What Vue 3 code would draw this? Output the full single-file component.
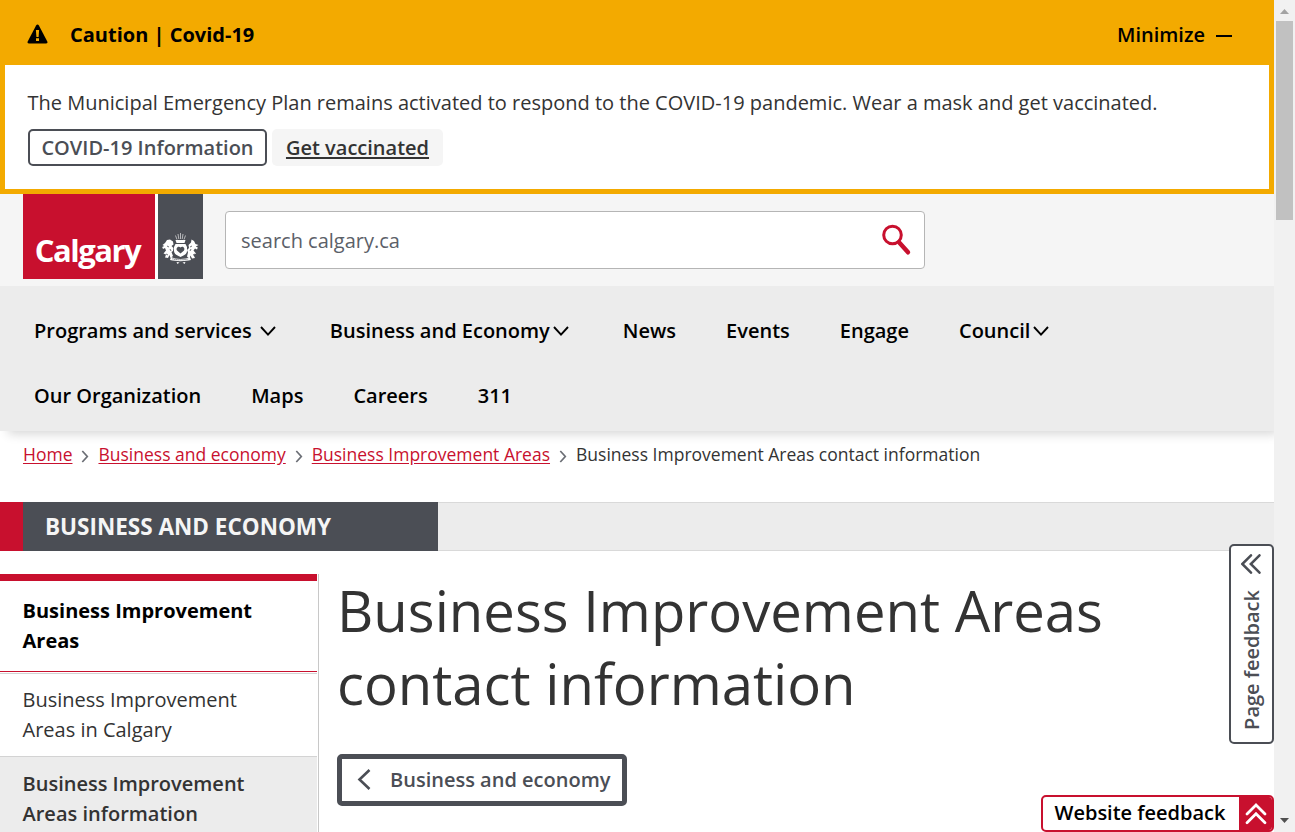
<script setup>
const rowOne = [
  { label: 'Programs and services', drop: true, gap: 8 },
  { label: 'Business and Economy', drop: true, gap: 3 },
  { label: 'News' },
  { label: 'Events' },
  { label: 'Engage' },
  { label: 'Council', drop: true, gap: 3 },
]
const rowTwo = [{ label: 'Our Organization' }, { label: 'Maps' }, { label: 'Careers' }, { label: '311' }]
const crumbs = ['Home', 'Business and economy', 'Business Improvement Areas']
</script>

<template>
  <div class="window">
    <div class="page">
      <section class="alert">
        <div class="alert-head">
          <svg class="warn" width="21" height="20" viewBox="0 0 21 20">
            <path d="M10.5 0.5c.6 0 1 .3 1.400 1L20.300 17.500c.5 1-.1 2-1.200 2H1.900C.8 19.500.2 18.500.7 17.500L9.100 1.500c.4-.7.800-1 1.400-1z" />
            <path d="M8.900 6h3.200l-.5 7H9.400zM9 14.200h3v2.800H9z" fill="#f3aa00" />
          </svg>
          <span class="alert-title">Caution | Covid-19</span>
          <span class="minimize">Minimize</span>
          <span class="dash"></span>
        </div>
        <div class="alert-body">
          <p>The Municipal Emergency Plan remains activated to respond to the COVID-19 pandemic. Wear a mask and get vaccinated.</p>
          <div class="alert-actions">
            <a class="btn-outline"><span>COVID-19 Information</span></a>
            <a class="btn-soft"><span>Get vaccinated</span></a>
          </div>
        </div>
      </section>

      <header class="masthead">
        <div class="logo">
          <div class="logo-name"><span>Calgary</span></div>
          <div class="logo-crest">
            <svg width="37" height="32" viewBox="0 0 37 32" fill="#fff">
              <path d="M13.500 2.500l1.500 4M16 1l.8 5M18.500 0v6M21 1l-.8 5M23.500 2.500l-1.500 4" stroke="#fff" stroke-width=".8" opacity=".75" />
              <path d="M13.500 7h10l-1 3h-8z" />
              <path d="M13.500 11h10l1.500 3v4c0 3-3 4.500-6.500 6-3.500-1.500-6.500-3-6.500-6v-4z" />
              <path d="M18.500 20.500l-3.500-3c-1.500-2.500 1.500-5 3.500-3 2-2 5 .5 3.500 3z" fill="#4b4e55" />
              <path d="M0.500 12l2.500-2 2-3 3-.5 3 2 .5 3-2 1.500 2 2-.5 3-1.500 1 1.500 4-2.500 2-1-3-1.500 3-3-.5 1-3-2.500-1 2.500-3-1-2.500-2 1-.8-2 2-1z" />
              <path d="M36.500 12l-3-1-1.500-3-2.500-1.500-.5 3-2.500 2.500.5 3-2 2 1 2.500-1 4 2.500 2 1-3 1.500 3 3-.5-1.500-3 2.500-1.500-2.500-3 1.500-2 2 1 .8-2-2-1z" />
              <path d="M5 13l2 1M8 16l1 2M30 13l-2 1M29 16l-1 2M4 21l2 1M33 21l-2 1" stroke="#4b4e55" stroke-width=".8" />
              <path d="M9 24c5 2.500 14 2.500 19 0l1 3c-6 1.500-15 1.500-21 0z" />
              <path d="M10.500 25.800c5 1.300 11 1.300 16 0" stroke="#4b4e55" fill="none" stroke-width="1.100" stroke-dasharray="1 1" />
              <path d="M14.500 29l3 .5-2 1.500zM20.500 29.500l3-.5-1 2z" />
            </svg>
          </div>
        </div>
        <div class="search">
          <span>search calgary.ca</span>
          <svg width="30" height="32" viewBox="0 0 30 32" fill="none" stroke="#c8102e">
            <circle cx="10.500" cy="11" r="8.800" stroke-width="3" />
            <path d="M17 18.200L26 28.300" stroke-width="4.400" stroke-linecap="round" />
          </svg>
        </div>
      </header>

      <nav class="menu">
        <div v-for="(row, r) in [rowOne, rowTwo]" :key="r" class="menu-row">
          <a v-for="(item, i) in row" :key="item.label" :class="['item', 'r' + r + i]">
            <span>{{ item.label }}</span>
            <svg v-if="item.drop" :style="{ marginLeft: item.gap + 'px' }" width="16" height="12" viewBox="0 0 16 12" fill="none" stroke="#000" stroke-width="1.900">
              <path d="M1 2L8 9.600L15 2" />
            </svg>
          </a>
        </div>
      </nav>

      <div class="crumbs">
        <template v-for="(c, i) in crumbs" :key="c">
          <a :class="'c' + i">{{ c }}</a>
          <svg width="8" height="13" viewBox="0 0 8 13" fill="none" stroke="#6b6e75" stroke-width="1.700"><path d="M1.300 1l5 5.500-5 5.500" /></svg>
        </template>
        <span>Business Improvement Areas contact information</span>
      </div>

      <div class="band">
        <div class="band-title"><span>BUSINESS AND ECONOMY</span></div>
      </div>

      <main class="main">
        <aside class="side">
          <div class="side-head">Business Improvement<br />Areas</div>
          <div class="side-link">Business Improvement<br />Areas in Calgary</div>
          <div class="side-link active">Business Improvement<br />Areas information</div>
        </aside>
        <article class="content">
          <h1>Business Improvement Areas<br />contact information</h1>
          <a class="back">
            <svg width="14" height="22" viewBox="0 0 14 22" fill="none" stroke="#4b4e55" stroke-width="2.600"><path d="M12.500 1L2.500 10.500l10 9.500" /></svg>
            <span>Business and economy</span>
          </a>
        </article>
      </main>
    </div>

    <div class="scroll">
      <svg width="21" height="20" viewBox="0 0 21 20"><path d="M6 14l4.500-5 4.500 5z" fill="#a3a3a3" /></svg>
      <div class="thumb"></div>
      <svg class="down" width="21" height="20" viewBox="0 0 21 20"><path d="M6 6l4.500 5L15 6z" fill="#505050" /></svg>
    </div>

    <div class="page-fb">
      <svg width="20" height="20" viewBox="0 0 20 20" fill="none" stroke="#4b4e55" stroke-width="2.500" stroke-linecap="round"><path d="M10 1.300L1.300 10l8.700 8.700M18.500 1.300L9.800 10l8.700 8.700" /></svg>
      <span>Page feedback</span>
    </div>
    <div class="site-fb">
      <span class="site-fb-label">Website feedback</span>
      <span class="site-fb-icon">
        <svg width="22" height="22" viewBox="0 0 22 22" fill="none" stroke="#fff" stroke-width="2.800" stroke-linecap="round"><path d="M2 11L11 2l9 9M2 19.700l9-9 9 9" /></svg>
      </span>
    </div>
  </div>
</template>

<style>
body { margin: 0; overflow: hidden; }
</style>

<style scoped>
* { box-sizing: border-box; }
.window { position: relative; display: flex; width: 1295px; height: 832px; overflow: hidden; background: #fff; font-family: "Open Sans", sans-serif; font-size: 20px; line-height: 30px; color: #333; }
.window span, .window a { white-space: nowrap; }
.page { width: 1274px; }
.alert { height: 194px; background: #f3aa00; padding: 0 5px 5px; }
.alert-head { height: 65px; padding: 5px 37px 0 22px; display: flex; align-items: center; color: #000; }
.warn { margin-top: -3px; }
.alert-title { margin-left: 22px; font-weight: 700; }
.minimize { margin-left: auto; font-weight: 600; }
.dash { width: 16px; height: 1.500px; background: #000; margin: 2px 0 0 11px; }
.alert-body { height: 124px; background: #fff; padding: 23px 22.500px; }
.alert-body p { margin: 0; white-space: nowrap; }
.alert-actions { display: flex; gap: 5px; margin: 11px 0 0 0.500px; font-weight: 600; }
.btn-outline { width: 239px; height: 37px; border: 2px solid #4b4e55; border-radius: 5px; display: flex; align-items: center; justify-content: center; color: #4b4e55; }
.btn-soft { width: 171px; height: 37px; border-radius: 5px; background: #f5f5f5; display: flex; align-items: center; justify-content: center; text-decoration: underline; text-decoration-thickness: 2px; text-underline-offset: 2px; }
.masthead { height: 92px; background: #f5f5f5; display: flex; padding-left: 23px; }
.logo { display: flex; width: 180px; height: 85px; gap: 3px; background: #fff; }
.logo-name { width: 132px; background: #c8102e; color: #fff; font: 700 31px/40px "Open Sans", sans-serif; letter-spacing: -1.500px; display: flex; justify-content: center; padding: 36px 3px 0 0; }
.logo-crest { width: 45px; background: #4b4e55; padding: 39px 0 0 4px; }
.logo-crest svg { display: block; }
.search { width: 700px; height: 58px; margin: 17px 0 0 22px; border: 1px solid #b5b5b5; border-radius: 4px; background: #fff; display: flex; align-items: center; justify-content: space-between; padding: 0 12px 0 15px; }
.search span { color: #5b6068; padding-top: 2px; }
.menu { position: relative; height: 145px; background: #ececec; padding: 12px 34px 0; font-weight: 600; color: #000; box-shadow: 6px 5px 10px -2px rgba(0, 0, 0, .16); clip-path: inset(0 0 -20px 0); }
.menu-row { height: 65px; display: flex; align-items: center; gap: 50px; }
.item { display: flex; align-items: center; }
.r00, .r01 { margin-right: 4px; }
.crumbs { height: 71px; padding: 10px 23px; display: flex; align-items: flex-start; font-size: 17.500px; line-height: 26px; }
.crumbs a { color: #c8102e; text-decoration: underline; text-underline-offset: 2px; }
.crumbs svg { margin: 9px 9px 0; }
.band { height: 49px; background: #ececec; border-top: 1px solid #d9d9d9; border-bottom: 1px solid #d9d9d9; }
.band-title { margin-top: -1px; width: 438px; height: 49px; background: #4b4e55; border-left: 23px solid #c8102e; padding-left: 22px; font-size: 22.500px; font-weight: 700; line-height: 50px; color: #f5f5f5; }
.main { display: flex; padding-top: 23px; }
.side { width: 319px; height: 260px; border-right: 1px solid #c8c8c8; padding-right: 1px; }
.side-head { height: 98px; border-top: 7px solid #c8102e; border-bottom: 1px solid #c8102e; padding: 15px 22.500px; font-weight: 700; color: #000; margin-bottom: 1px; }
.side-link { height: 83px; border-top: 1px solid #d3d3d3; padding: 11px 22.500px; }
.side-link.active { height: 84px; background: #ececec; font-weight: 600; padding-top: 12px; }
.content { padding-left: 18px; }
h1 { margin: 0; font-size: 56.250px; line-height: 73px; font-weight: 400; white-space: nowrap; }
.back { margin-top: 34px; width: 290px; height: 52px; border: 5px solid #4b4e55; border-radius: 5px; display: flex; align-items: center; padding-left: 15px; color: #4b4e55; font-weight: 600; }
.back svg { margin-right: 19px; }
.scroll { width: 21px; height: 832px; background: #f1f1f1; display: flex; flex-direction: column; }
.scroll svg { display: block; }
.thumb { width: 17px; height: 199px; margin: 1px 0 0 2px; background: #c1c1c1; }
.down { margin-top: auto; }
.page-fb { position: absolute; left: 1229px; top: 544px; width: 45px; height: 200px; border: 2px solid #4b4e55; border-radius: 5px; background: #fff; color: #4b4e55; font-weight: 600; display: flex; flex-direction: column; align-items: center; padding: 8px 1px 0 0; }
.page-fb span { writing-mode: vertical-rl; transform: rotate(180deg); margin: 16px 0 0 1px; }
.site-fb { position: absolute; left: 1041px; top: 795px; width: 233px; height: 37px; border: 2px solid #c8102e; border-radius: 5px; background: #fff; display: flex; color: #000; font-weight: 600; overflow: hidden; }
.site-fb-label { width: 194px; margin-right: 2px; text-align: center; line-height: 32px; }
.site-fb-icon { flex: 1; background: #c8102e; display: flex; align-items: center; justify-content: center; }
</style>
